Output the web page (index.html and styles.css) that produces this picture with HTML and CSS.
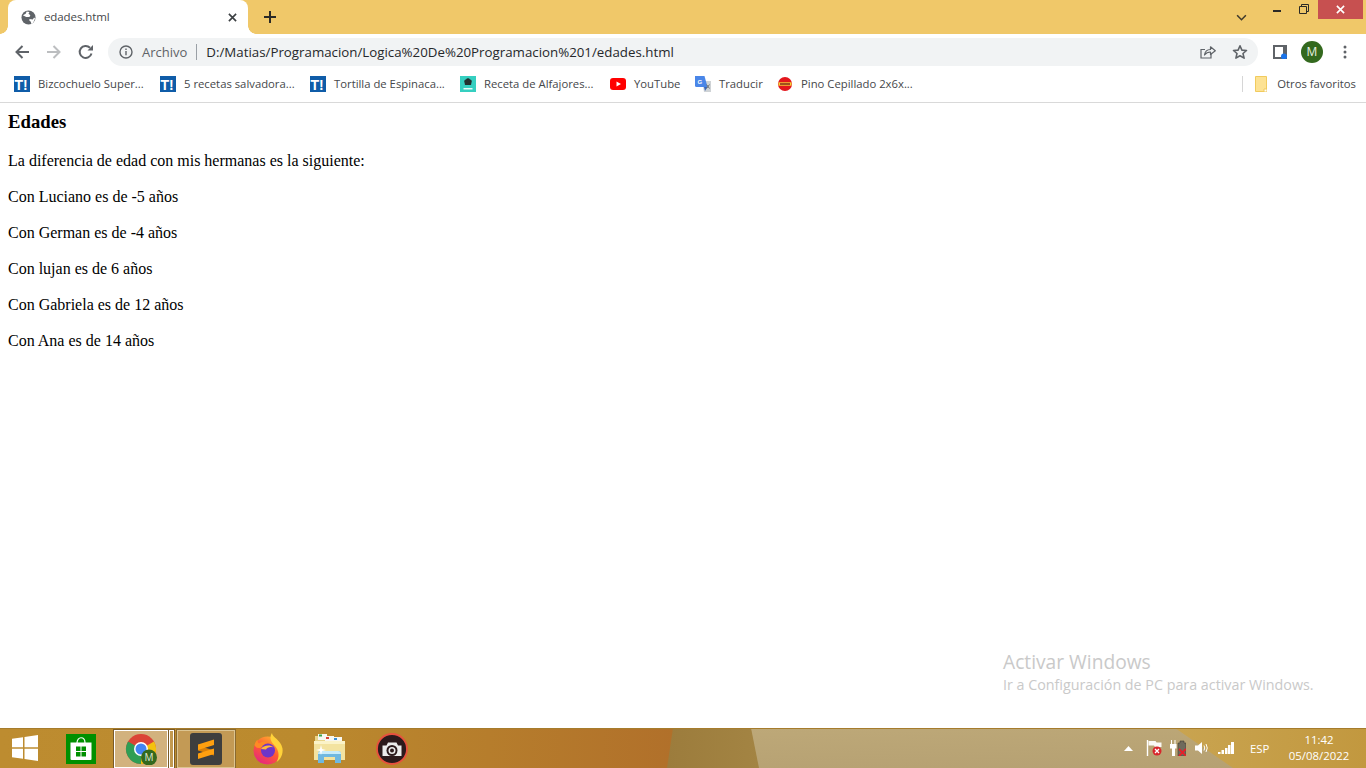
FILE: index.html
```html
<!DOCTYPE html>
<html lang="es">
<head>
<meta charset="utf-8">
<title>edades.html</title>
<link rel="stylesheet" href="styles.css">
</head>
<body>
<div class="window">
  <header class="browser">
    <div class="tabstrip">
      <div class="tab">
        <svg class="tab-favicon" viewBox="0 0 16 16"><circle cx="8" cy="8" r="7.500" fill="#5f6368"/><path d="M2 5.500 5 4l1-2.500 3 .5-1 2 2 1.500-1 2H5.500zM9 9.500l3.500.5 1.500-2 1 1-2 4.500-2 1.500-.5-2.500-1.500-1z" fill="#fff"/></svg>
        <span class="tab-title">edades.html</span>
        <svg class="tab-close" viewBox="0 0 10 10"><path d="M1 1l8 8M9 1l-8 8" stroke="#3c4043" stroke-width="1.800" fill="none"/></svg>
      </div>
      <svg class="new-tab" viewBox="0 0 12 12"><path d="M6 0v12M0 6h12" stroke="#2b2a26" stroke-width="2" fill="none"/></svg>
      <div class="strip-spacer"></div>
      <svg class="tab-search" viewBox="0 0 12 8"><path d="M1 1.500l5 5 5-5" stroke="#3f3a2c" stroke-width="1.800" fill="none"/></svg>
      <div class="win-controls">
        <svg class="win-min" viewBox="0 0 8 3"><rect width="8" height="2" y="0" fill="#2b2a26"/></svg>
        <svg class="win-restore" viewBox="0 0 10 10"><path d="M.5 2.500h7v7h-7zM2.500 2.500v-2h7v7h-2" stroke="#2b2a26" stroke-width="1" fill="none"/></svg>
        <div class="win-close"><svg viewBox="0 0 10 10"><path d="M1 1l8 8M9 1l-8 8" stroke="#fff" stroke-width="1.800" fill="none"/></svg></div>
      </div>
    </div>

    <div class="toolbar">
      <svg class="nav nav-back" viewBox="0 0 16 16"><path d="M15 8H2.500M8.500 2l-6 6 6 6" stroke="#5f6368" stroke-width="2" fill="none"/></svg>
      <svg class="nav nav-forward" viewBox="0 0 16 16"><path d="M1 8h12.500M7.500 2l6 6-6 6" stroke="#bcbec0" stroke-width="2" fill="none"/></svg>
      <svg class="nav nav-reload" viewBox="0 0 16 16"><path d="M13.500 9.500A6 6 0 1 1 12 3.700" stroke="#5f6368" stroke-width="2" fill="none"/><path d="M15 1v5.500H9.500z" fill="#5f6368"/></svg>
      <div class="omnibox">
        <svg class="omni-info" viewBox="0 0 14 14"><circle cx="7" cy="7" r="6" stroke="#5f6368" stroke-width="1.400" fill="none"/><path d="M7 6v4.200M7 3.500v1.400" stroke="#5f6368" stroke-width="1.400"/></svg>
        <span class="omni-scheme">Archivo</span>
        <span class="omni-sep"></span>
        <span class="omni-url">D:/Matias/Programacion/Logica%20De%20Programacion%201/edades.html</span>
        <svg class="omni-share" viewBox="0 0 16 16"><path d="M11 9.500V14H1V5.500h4" stroke="#5f6368" stroke-width="1.200" fill="none"/><path d="M4.500 11C5 7.500 7.500 5.500 10.500 5.500V2.800L15.300 6.800 10.500 10.500V8C8 8 6 9 4.500 11z" stroke="#5f6368" stroke-width="1.200" fill="none" stroke-linejoin="round"/></svg>
        <svg class="omni-star" viewBox="0 0 16 16"><path d="M8 1.800l1.900 4.300 4.600.4-3.500 3 1.100 4.600L8 11.700l-4.100 2.400L5 9.500l-3.500-3 4.600-.4z" stroke="#5f6368" stroke-width="1.600" fill="none" stroke-linejoin="round"/></svg>
      </div>
      <svg class="side-panel" viewBox="0 0 14 14"><rect width="14" height="14" fill="#5f6368"/><rect x="2" y="2" width="8" height="10" fill="#fff"/><circle cx="11" cy="11.500" r="3" fill="#1a73e8"/></svg>
      <div class="avatar">M</div>
      <svg class="menu-dots" viewBox="0 0 4 14"><circle cx="2" cy="2" r="1.500" fill="#5f6368"/><circle cx="2" cy="7" r="1.500" fill="#5f6368"/><circle cx="2" cy="12" r="1.500" fill="#5f6368"/></svg>
    </div>

    <nav class="bookmarks">
      <a class="bm bm-1">
        <svg viewBox="0 0 16 16"><rect width="16" height="16" fill="#0f5ca8"/><text x=".5" y="13.500" class="t-mark">T!</text></svg>
        <span>Bizcochuelo Super...</span>
      </a>
      <a class="bm bm-2">
        <svg viewBox="0 0 16 16"><rect width="16" height="16" fill="#0f5ca8"/><text x=".5" y="13.500" class="t-mark">T!</text></svg>
        <span>5 recetas salvadora...</span>
      </a>
      <a class="bm bm-3">
        <svg viewBox="0 0 16 16"><rect width="16" height="16" fill="#0f5ca8"/><text x=".5" y="13.500" class="t-mark">T!</text></svg>
        <span>Tortilla de Espinaca...</span>
      </a>
      <a class="bm bm-4">
        <svg viewBox="0 0 16 16"><rect width="16" height="16" fill="#35cfc0"/><path d="M4.500 6.500a2 2 0 0 1 1.500-3 2.300 2.300 0 0 1 4 0 2 2 0 0 1 1.500 3L11 9H5z" fill="#22302f"/><rect x="3.500" y="12" width="9" height="1.500" fill="#e6fbf8"/></svg>
        <span>Receta de Alfajores...</span>
      </a>
      <a class="bm bm-5">
        <svg viewBox="0 0 16 16"><rect y="2" width="16" height="12" rx="3" fill="#f00"/><path d="M6.500 5.500 11 8l-4.500 2.500z" fill="#fff"/></svg>
        <span>YouTube</span>
      </a>
      <a class="bm bm-6">
        <svg viewBox="0 0 16 16"><path d="M7 5h9v11H9z" fill="#cfd3d6"/><path d="M0 0h9.500l3 11H1.500A1.500 1.500 0 0 1 0 9.500z" fill="#4a86e8"/><path d="M9 11h3.500L10 15z" fill="#3a66b8"/><text x="2.600" y="8" class="g-mark">G</text><path d="M11.500 8.500l3 4M14.500 8.500l-3 4" stroke="#6f7478" stroke-width="1"/></svg>
        <span>Traducir</span>
      </a>
      <a class="bm bm-7">
        <svg viewBox="0 0 16 16"><circle cx="8" cy="8" r="7" fill="#e3161d"/><rect x="1.500" y="6.300" width="13" height="3.400" fill="#f6d23a"/><rect x="3" y="7.300" width="10" height="1.400" fill="#7a1a12"/></svg>
        <span>Pino Cepillado 2x6x...</span>
      </a>
      <div class="bm-spacer"></div>
      <span class="bm-sep"></span>
      <a class="bm bm-other">
        <svg viewBox="0 0 12 16"><path d="M.5.500h11v15H.5z" fill="#fde293" stroke="#f1cb5e"/><path d="M9 13h3v3H9z" fill="#fff" stroke="#f1cb5e"/></svg>
        <span>Otros favoritos</span>
      </a>
    </nav>
  </header>

  <main class="page">
    <h3 class="page-title">Edades</h3>
    <p class="line">La diferencia de edad con mis hermanas es la siguiente:</p>
    <p class="line">Con Luciano es de -5 años</p>
    <p class="line">Con German es de -4 años</p>
    <p class="line">Con lujan es de 6 años</p>
    <p class="line">Con Gabriela es de 12 años</p>
    <p class="line">Con Ana es de 14 años</p>
    <div class="activate">
      <div class="activate-title">Activar Windows</div>
      <div class="activate-sub">Ir a Configuración de PC para activar Windows.</div>
    </div>
  </main>

  <footer class="taskbar">
    <svg class="task-bg" viewBox="0 0 1366 40" preserveAspectRatio="none">
      <defs>
        <linearGradient id="tb-left" x1="0" x2="1" y1="0" y2="0">
          <stop offset="0" stop-color="#bd8c30"/>
          <stop offset=".45" stop-color="#bb8a2e"/>
          <stop offset="1" stop-color="#b1702a"/>
        </linearGradient>
        <linearGradient id="tb-wedge" x1="0" x2="1" y1="0" y2="0">
          <stop offset="0" stop-color="#9c7c3c"/>
          <stop offset="1" stop-color="#a38443"/>
        </linearGradient>
        <linearGradient id="tb-beige" x1="0" x2="1" y1="0" y2="1">
          <stop offset="0" stop-color="#c0ab7a"/>
          <stop offset="1" stop-color="#b5a072"/>
        </linearGradient>
        <linearGradient id="tb-right" x1="0" x2="1" y1="0" y2="0">
          <stop offset="0" stop-color="#c9a450"/>
          <stop offset="1" stop-color="#c2983f"/>
        </linearGradient>
      </defs>
      <rect width="1366" height="40" fill="url(#tb-beige)"/>
      <rect width="674" height="40" fill="url(#tb-left)"/>
      <polygon points="673,0 751,0 759,40 667,40" fill="url(#tb-wedge)"/>
      <polygon points="1175,0 1366,0 1366,40 1233,40" fill="url(#tb-right)"/>
      <rect width="1366" height="1" fill="#a67c2c"/>
    </svg>
    <svg class="start" viewBox="0 0 26 26"><path d="M0 3.800 11 2.200V12.300H0zM12.500 2 26 0V12.300H12.500zM0 13.800H11V23.800L0 22.200zM12.500 13.800H26V26L12.500 24z" fill="#fff"/></svg>
    <div class="task-item task-store">
      <svg viewBox="0 0 30 30"><rect width="30" height="30" fill="#009000"/><path d="M11 9c0-7 8-7 8 0" stroke="#fff" stroke-width="1.200" fill="none"/><path d="M4.500 8.500h21v16.500q0 1-1 1h-19q-1 0-1-1z" fill="#fff"/><path d="M10 12.500h4.500v4.500H10zM15.500 12.500H20v4.500h-4.500zM10 18h4.500v4.500H10zM15.500 18H20v4.500h-4.500z" fill="#009000"/></svg>
    </div>
    <div class="task-item task-chrome">
      <svg viewBox="0 0 32 32">
        <circle cx="16" cy="16" r="15" fill="#db4437"/>
        <path d="M16 16 29 8.500A15 15 0 0 1 16 31z" fill="#f4c20d"/>
        <path d="M16 16 16 31A15 15 0 0 1 3 8.500z" fill="#2f9e55"/>
        <circle cx="16" cy="16" r="7" fill="#fff"/>
        <circle cx="16" cy="16" r="5.500" fill="#4285f4"/>
        <circle cx="24" cy="24.500" r="8" fill="#33691e"/>
        <text x="24" y="28" class="m-mark">M</text>
      </svg>
    </div>
    <div class="task-sliver"></div>
    <div class="task-item task-sublime">
      <svg viewBox="0 0 32 32"><rect width="32" height="32" rx="3" fill="#3e3e3e"/><path d="M8 12.500 24 17.500V22.500L8 17.500z" fill="#d97f08"/><path d="M24 6.500 8 11.500V17L24 12z" fill="#ff9f0f"/><path d="M24 15.500 8 20.500V26L24 21z" fill="#ff9f0f"/></svg>
    </div>
    <div class="task-item task-firefox">
      <svg viewBox="0 0 32 32">
        <defs>
          <linearGradient id="ff-base" x1=".8" y1="0" x2=".2" y2="1">
            <stop offset="0" stop-color="#ffb52e"/>
            <stop offset=".5" stop-color="#ff5a32"/>
            <stop offset="1" stop-color="#e3208a"/>
          </linearGradient>
        </defs>
        <circle cx="15.500" cy="17.500" r="14" fill="url(#ff-base)"/>
        <path d="M20 0c0 4 9 7 10.500 15.500.8 6-2 11-6 13.500 3-5 2.500-10 0-14-2-3-6-6-6-10 0-2 .5-4 1.500-5z" fill="#ffd23a"/>
        <path d="M2.500 12c.5-2 1.500-4 3-5.500 0 2 .5 3 1.500 4 2-2 6-2.500 9-1-3 1-4.500 2.500-4.500 4-5 2.500-7.500 2-9-1.500z" fill="#ff8a24"/>
        <circle cx="16" cy="17.500" r="7" fill="#6f35c8"/>
        <path d="M9 16c2-3.500 9-5 12.500-1.500-3.500-1-6.500 0-7.500 2z" fill="#ffb83a"/>
      </svg>
    </div>
    <div class="task-item task-explorer">
      <svg viewBox="0 0 32 32">
        <path d="M1 3h10l2 2h14v21H1z" fill="#e8d48a"/>
        <path d="M4 1h9v6H4z" fill="#f7f7f2"/><rect x="5" y="1.500" width="3" height="2" fill="#3aa24a"/>
        <path d="M11 3h9v6h-9z" fill="#f7f7f2"/><rect x="12" y="4" width="3" height="2" fill="#d9423a"/>
        <path d="M19 4h9v6h-9z" fill="#f7f7f2"/><rect x="20" y="5" width="3" height="2" fill="#3a8fd9"/>
        <path d="M0 8h31v19H0z" fill="#f3e3a0"/>
        <path d="M0 8h31v3H0z" fill="#fbf3c8"/>
        <path d="M4 21q0-3 3-3h17q3 0 3 3v9h-6v-6H10v6H4z" fill="#6fb8e0"/>
        <path d="M4 21q0-3 3-3h17q3 0 3 3H4z" fill="#c8ecfa"/>
        <path d="M7 12l1 4 4 1-4 1-1 4-1-4-4-1 4-1z" fill="#fff"/>
      </svg>
    </div>
    <div class="task-item task-camera">
      <svg viewBox="0 0 32 32">
        <circle cx="16" cy="16" r="15" fill="#2c1a1c" stroke="#e8503e" stroke-width="1.800"/>
        <path d="M6.500 12.500h4l1.500-3h8.500l1.500 3h3.500v10.500h-19z" fill="#ececec"/>
        <circle cx="16" cy="17.500" r="5.500" fill="#2c1a1c"/>
        <circle cx="16" cy="17.500" r="3.500" fill="#ececec"/>
        <circle cx="16" cy="17.500" r="2" fill="#2c1a1c"/>
      </svg>
    </div>
    <div class="task-spacer"></div>
    <div class="tray">
      <svg class="tray-caret" viewBox="0 0 9 5"><path d="M4.500 0 9 5H0z" fill="#fff"/></svg>
      <svg class="tray-flag" viewBox="0 0 16 16"><path d="M1.500 0v16" stroke="#fff" stroke-width="1.400"/><path d="M2.500 1h7l1 1.500h5V7H9L8 5.500H2.500z" fill="#fff" opacity=".92"/><circle cx="11" cy="11" r="4.500" fill="#d8262c"/><path d="M9 9l4 4M13 9l-4 4" stroke="#fff" stroke-width="1.300"/></svg>
      <svg class="tray-plug" viewBox="0 0 16 16"><path d="M0 4h6.500v4.500H5V16H2V8.500H0z" fill="#fff"/><path d="M1 0h1v4H1zM4.500 0h1v4h-1z" fill="#fff"/><path d="M8 3h2V1h4v2h2v13H8z" fill="#6f6a5c" stroke="#3f3c34" stroke-width=".6"/><path d="M9 9l7 7M16 9l-7 7" stroke="#e5202a" stroke-width="1.800"/></svg>
      <svg class="tray-sound" viewBox="0 0 16 14"><path d="M1 4.500h3L8 1v12L4 9.500H1z" fill="#fff"/><path d="M10 4.500q1.500 2.500 0 5M12 3q2.500 4 0 8" stroke="#fff" stroke-width="1" fill="none"/></svg>
      <svg class="tray-signal" viewBox="0 0 16 12"><path d="M0 10h2.500v2H0zM3.500 8H6v4H3.500zM7 6h2.500v6H7zM10 3h2.500v9H10zM13 0h3v12h-3z" fill="#fff"/></svg>
      <span class="tray-lang">ESP</span>
      <div class="clock">
        <span>11:42</span>
        <span>05/08/2022</span>
      </div>
    </div>
  </footer>
</div>
</body>
</html>
```

FILE: styles.css
```css
* { box-sizing: border-box; }
html, body { margin: 0; padding: 0; height: 100%; overflow: hidden; }
body { background: #fff; }
a { color: inherit; text-decoration: none; }
svg { display: block; flex: none; }

.window { height: 768px; display: flex; flex-direction: column; }

/* browser chrome */
.browser { flex: none; font-family: "Open Sans", "Noto Sans", sans-serif; color: #3c4043; border-bottom: 1px solid #d9d9d9; background: #fff; }

.tabstrip { height: 34px; background: #f0c869; display: flex; align-items: stretch; padding-left: 8px; }
.tab { position: relative; width: 240px; background: #fff; border-radius: 8px 8px 0 0; display: flex; align-items: center; padding-left: 13px; }
.tab::before, .tab::after { content: ""; position: absolute; bottom: 0; width: 8px; height: 8px; }
.tab::before { left: -8px; background: radial-gradient(circle at 0 0, transparent 7.5px, #fff 8px); }
.tab::after { right: -8px; background: radial-gradient(circle at 100% 0, transparent 7.5px, #fff 8px); }
.tab-favicon { width: 15px; height: 15px; }
.tab-title { font-size: 11.5px; margin-left: 8px; padding-bottom: 1px; color: #45474a; flex: 1; letter-spacing: -.1px; }
.tab-close { width: 9px; height: 9px; margin-right: 11px; }
.new-tab { width: 12px; height: 12px; align-self: center; margin-left: 16px; }
.strip-spacer { flex: 1; }
.tab-search { width: 11px; height: 7px; align-self: center; margin-right: 26px; }
.win-controls { display: flex; align-items: flex-start; }
.win-min { width: 8px; height: 3px; margin-top: 10px; margin-right: 18px; }
.win-restore { width: 10px; height: 10px; margin-top: 4px; margin-right: 9px; }
.win-close { width: 45px; height: 19px; margin-right: 3px; background: #c75050; display: flex; align-items: center; justify-content: center; }
.win-close svg { width: 9px; height: 9px; }

.toolbar { height: 36px; display: flex; align-items: center; padding-left: 14px; }
.nav { width: 16px; height: 16px; }
.nav-forward { margin-left: 16px; }
.nav-reload { margin-left: 16px; }
.omnibox { width: 1150px; height: 28px; margin-left: 14px; background: #f1f3f4; border-radius: 14px; display: flex; align-items: center; padding-left: 11px; }
.omni-info { width: 14px; height: 14px; }
.omni-scheme { font-size: 13px; color: #5f6368; margin-left: 9px; }
.omni-sep { width: 1px; height: 16px; background: #9aa0a6; margin-left: 9px; margin-right: 9px; }
.omni-url { font-size: 13.3px; color: #26282b; flex: 1; }
.omni-share { width: 16px; height: 16px; margin-right: 16px; }
.omni-star { width: 16px; height: 16px; margin-right: 10px; }
.side-panel { width: 14px; height: 14px; margin-left: 15px; }
.avatar { width: 22px; height: 22px; margin-left: 14px; border-radius: 50%; background: #33691e; color: #e8f0e0; font-size: 12px; line-height: 22px; text-align: center; }
.menu-dots { width: 4px; height: 14px; margin-left: 20px; }

.bookmarks { height: 32px; padding-bottom: 4px; display: flex; align-items: center; padding-left: 14px; }
.bm { display: flex; align-items: center; font-size: 11.3px; color: #45474a; white-space: nowrap; }
.bm span { padding-bottom: 2px; }
.bm svg { width: 16px; height: 16px; margin-right: 8px; }
.bm-1 { width: 146px; }
.bm-2 { width: 150px; }
.bm-3 { width: 150px; }
.bm-4 { width: 150px; }
.bm-5 { width: 85px; }
.bm-6 { width: 82px; }
.bm-spacer { flex: 1; }
.bm-sep { width: 1px; height: 16px; background: #d6d6d6; margin-right: 12px; }
.bm-other svg { width: 12px; height: 16px; margin-right: 10px; }
.bm-other { margin-right: 10px; }
.t-mark { font-family: "Liberation Sans", sans-serif; font-weight: 700; font-size: 14px; fill: #fff; }
.g-mark { font-family: "Liberation Sans", sans-serif; font-weight: 700; font-size: 6px; fill: #fff; }
.m-mark { font-family: "Open Sans", sans-serif; font-size: 10px; fill: #dfe8d5; text-anchor: middle; }

/* page */
.page { position: relative; flex: 1; padding: 8px; font-family: "Liberation Serif", "Times New Roman", serif; font-size: 16px; color: #000; }
.page-title { margin: 0 0 20px; font-size: 18.72px; line-height: 21px; font-weight: 700; }
.line { margin: 0 0 18px; line-height: 18px; }
.activate { position: absolute; left: 1003px; top: 546px; font-family: "Open Sans", "Noto Sans", sans-serif; color: #c9c9c9; white-space: nowrap; }
.activate-title { font-size: 19.2px; line-height: 26px; }
.activate-sub { font-size: 14.3px; line-height: 20px; }

/* taskbar */
.taskbar { position: relative; flex: none; height: 40px; display: flex; align-items: center; }
.task-bg { position: absolute; left: 0; top: 0; width: 1366px; height: 40px; }
.start { position: relative; width: 26px; height: 26px; margin-left: 12px; }
.task-item { position: relative; display: flex; align-items: center; justify-content: center; height: 38px; margin-top: 1px; }
.task-store { width: 30px; margin-left: 28px; }
.task-store svg { width: 30px; height: 30px; }
.task-chrome { width: 54px; margin-left: 18px; background: #d2b27e; border: 1px solid #fff; outline: 1px solid #7a5a26; }
.task-chrome svg { width: 32px; height: 32px; }
.task-sliver { position: relative; width: 5px; height: 38px; margin-top: 1px; border: 1px solid #fff; outline: 1px solid #7a5a26; margin-left: 1px; background: #c39a50; }
.task-sublime { width: 58px; margin-left: 3px; background: #c39a55; border: 1px solid #dcc491; outline: 1px solid #8a6a30; }
.task-sublime svg { width: 32px; height: 32px; }
.task-firefox { width: 32px; margin-left: 17px; }
.task-firefox svg { width: 32px; height: 32px; }
.task-explorer { width: 32px; margin-left: 30px; }
.task-explorer svg { width: 32px; height: 32px; }
.task-camera { width: 32px; margin-left: 30px; }
.task-camera svg { width: 32px; height: 32px; }
.task-spacer { flex: 1; }
.tray { position: relative; display: flex; align-items: center; font-family: "Open Sans", "Noto Sans", sans-serif; color: #fff; font-size: 11.4px; }
.tray-caret { width: 9px; height: 5px; }
.tray-flag { width: 16px; height: 16px; margin-left: 13px; }
.tray-plug { width: 16px; height: 16px; margin-left: 8px; }
.tray-sound { width: 16px; height: 14px; margin-left: 8px; }
.tray-signal { width: 16px; height: 12px; margin-left: 8px; }
.tray-lang { margin-left: 16px; width: 20px; }
.clock { display: flex; flex-direction: column; align-items: center; width: 78px; margin-left: 10px; margin-right: 8px; line-height: 16px; }
```
